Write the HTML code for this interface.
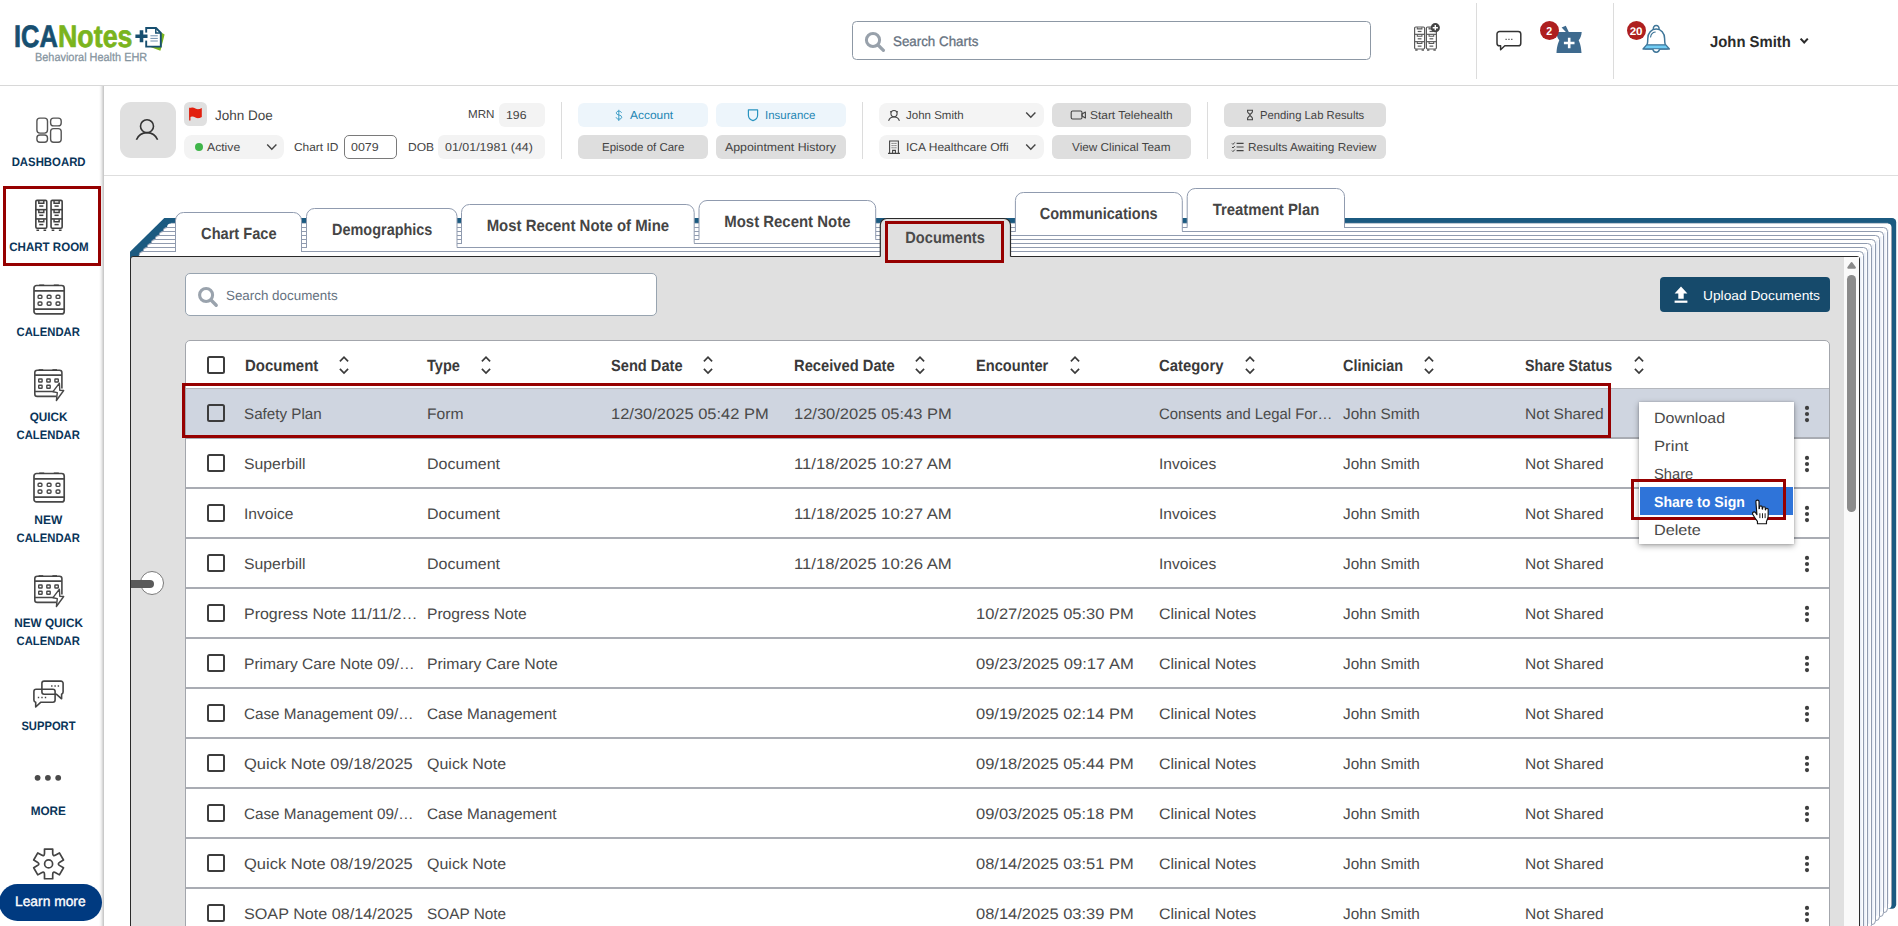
<!DOCTYPE html>
<html><head><meta charset="utf-8"><title>ICANotes</title>
<style>
html,body{margin:0;padding:0;background:#fff}
#root{position:relative;width:1898px;height:926px;overflow:hidden;background:#fff;font-family:"Liberation Sans",sans-serif}
.t{position:absolute;white-space:nowrap;line-height:20px}
.a{position:absolute}
svg{overflow:visible}
</style></head><body><div id="root">
<div class="a" style="left:0px;top:85px;width:1898px;height:1px;background:#d8d8d8"></div><span class="t" id="t0" style="top:17.30px;line-height:39px;font-size:31px;font-weight:700;color:#174f70;left:14.20px;transform-origin:0 50%;transform:matrix(0.8204,0.0005,0,1,0,0);-webkit-text-stroke:0.7px #174f70;">ICA</span><span class="t" id="t1" style="top:17.30px;line-height:39px;font-size:31px;font-weight:700;color:#7ab41d;left:58.30px;transform-origin:0 50%;transform:matrix(0.8649,0.0005,0,1,0,0);-webkit-text-stroke:0.7px #7ab41d;">Notes</span><svg class="a" style="left:134px;top:24px;" width="34" height="30" viewBox="0 0 34 30">
<path d="M12.4 21.6l14 5.2 4.2-16.400-3.400-1.800z" fill="#7ab41d"/>
<path d="M12.200 4h9.800l4.800 4.800v13.800h-14.600z" fill="#fff" stroke="#174f70" stroke-width="1.900" stroke-linejoin="miter"/>
<path d="M21.800 4v5h5" fill="none" stroke="#174f70" stroke-width="1.500"/>
<path d="M16.400 11.800h7.400M16.400 14.400h7.400M16.400 17h7.400" stroke="#6f8fae" stroke-width="1"/>
<rect x="10.600" y="8.600" width="3.600" height="8" fill="#fff"/>
<path d="M1.400 12.300h12.100M7.500 6.300v12" stroke="#174f70" stroke-width="3.600" fill="none"/>
</svg><span class="t" id="t2" style="top:48.30px;line-height:17px;font-size:11.7px;font-weight:400;color:#84939e;left:34.80px;transform-origin:0 50%;transform:matrix(0.9335,0.0005,0,1,0,0);-webkit-text-stroke:0.250px #84939e;">Behavioral Health EHR</span><div class="a" style="left:852px;top:21.2px;width:516.6px;height:37.2px;border:1px solid #8d98a5;border-radius:4.500px;background:#fff"></div><svg class="a" style="left:862px;top:28px;" width="26" height="26" viewBox="0 0 26 26"><circle cx="11" cy="12" r="6.6" fill="none" stroke="#98a1ab" stroke-width="3"/><path d="M16 17l5.4 5.4" stroke="#98a1ab" stroke-width="3.2" stroke-linecap="round"/></svg><span class="t" id="t3" style="top:32.30px;line-height:19px;font-size:13.8px;font-weight:400;color:#66727f;left:892.90px;transform-origin:0 50%;transform:matrix(0.9673,0.0005,0,1,0,0);-webkit-text-stroke:0.3px #66727f;">Search Charts</span><svg class="a" style="left:1412px;top:22px;" width="30" height="32" viewBox="0 0 30 32"><rect x="2.6" y="5" width="10" height="22" rx="1.200" fill="#fff" stroke="#5a5a5a" stroke-width="1.2"/><path d="M2.6 12.3333h10" stroke="#5a5a5a" stroke-width="1.2"/><path d="M2.6 19.6667h10" stroke="#5a5a5a" stroke-width="1.2"/><path d="M5.3 5.3v1.6h4.6v-1.6" fill="none" stroke="#5a5a5a" stroke-width="1.08"/><path d="M5.7 9.47333h3.8" stroke="#5a5a5a" stroke-width="1.2"/><path d="M5.3 12.6333v1.6h4.6v-1.6" fill="none" stroke="#5a5a5a" stroke-width="1.08"/><path d="M5.7 16.8067h3.8" stroke="#5a5a5a" stroke-width="1.2"/><path d="M5.3 19.9667v1.6h4.6v-1.6" fill="none" stroke="#5a5a5a" stroke-width="1.08"/><path d="M5.7 24.14h3.8" stroke="#5a5a5a" stroke-width="1.2"/><path d="M3.2 28h2.4M9.6 28h2.4" stroke="#5a5a5a" stroke-width="1.6"/><rect x="14.4" y="5" width="10" height="22" rx="1.200" fill="#fff" stroke="#5a5a5a" stroke-width="1.2"/><path d="M14.4 12.3333h10" stroke="#5a5a5a" stroke-width="1.2"/><path d="M14.4 19.6667h10" stroke="#5a5a5a" stroke-width="1.2"/><path d="M17.1 5.3v1.6h4.6v-1.6" fill="none" stroke="#5a5a5a" stroke-width="1.08"/><path d="M17.5 9.47333h3.8" stroke="#5a5a5a" stroke-width="1.2"/><path d="M17.1 12.6333v1.6h4.6v-1.6" fill="none" stroke="#5a5a5a" stroke-width="1.08"/><path d="M17.5 16.8067h3.8" stroke="#5a5a5a" stroke-width="1.2"/><path d="M17.1 19.9667v1.6h4.6v-1.6" fill="none" stroke="#5a5a5a" stroke-width="1.08"/><path d="M17.5 24.14h3.8" stroke="#5a5a5a" stroke-width="1.2"/><path d="M15 28h2.4M21.4 28h2.4" stroke="#5a5a5a" stroke-width="1.6"/><circle cx="23.3" cy="5.7" r="4.6" fill="#444"/><path d="M20.7 5.7h5.2M23.3 3.1v5.2" stroke="#fff" stroke-width="1.4"/></svg><div class="a" style="left:1476px;top:3px;width:1px;height:76px;background:#dcdcdc"></div><svg class="a" style="left:1494px;top:28px;" width="30" height="26" viewBox="0 0 30 26"><path d="M5.6 3.4h18.6a2.6 2.6 0 0 1 2.6 2.6v9.2a2.6 2.6 0 0 1 -2.6 2.6h-13.4l-4.2 4v-4h-1a2.6 2.6 0 0 1 -2.6 -2.6v-9.2a2.6 2.6 0 0 1 2.6 -2.6z" fill="#fff" stroke="#333" stroke-width="1.5" stroke-linejoin="round"/><path d="M11.4 11.3h1.5M14.2 11.3h1.5M17 11.3h1.5" stroke="#444" stroke-width="1"/></svg><svg class="a" style="left:1554px;top:24px;" width="30" height="32" viewBox="0 0 30 32"><path d="M7.600 3.600l4.200 -1.800 3 6.100h12.900c-.2 3.6-1.4 6.2-3 8.4 1.4 3.2 2.4 6.4 2.8 12.7h-25c.4-6.3 1.4-9.5 2.8-12.7-1.6-2.2-2.8-4.8-3-8.4h9.6z" fill="#3e6a8e"/><path d="M9.900 19h10.600M15.200 13.700v10.600" stroke="#fff" stroke-width="2.600"/></svg><div class="a" style="left:1540px;top:21px;width:19px;height:19px;border-radius:50%;background:#ae1f1f"></div><div class="t" style="top:23.30px;line-height:16px;font-size:11.5px;font-weight:700;color:#fff;left:1549.60px;width:0;display:flex;justify-content:center;"><span id="t4" style="display:inline-block;transform:matrix(0.9300,0.0005,0,1,0,0);">2</span></div><div class="a" style="left:1613px;top:3px;width:1px;height:76px;background:#dcdcdc"></div><svg class="a" style="left:1640px;top:22px;" width="32" height="34" viewBox="0 0 32 34">
<path d="M5.2 26.7c2.4-2.6 2.6-5 2.6-10.2 0-5.4 3.6-9.4 8.4-9.4s8.4 4 8.4 9.4c0 5.2.2 7.600 2.600 10.200z" fill="#fff" stroke="#3f7699" stroke-width="1.5" stroke-linejoin="round"/>
<path d="M6.600 22.800h19.200l3.600 4.200h-26.400z" fill="#72cdf4" stroke="#3f7699" stroke-width="1.3" stroke-linejoin="round"/>
<path d="M13.4 7.4c-.4-2.4.8-3.800 2.800-3.800s3.200 1.400 2.800 3.800" fill="none" stroke="#3f7699" stroke-width="1.5"/>
<path d="M12.800 27.200c.4 2 1.600 3 3.400 3s3-1 3.400-3" fill="#fff" stroke="#3f7699" stroke-width="1.5"/>
<path d="M10.600 15c.4-2.800 2-4.600 4.600-5" fill="none" stroke="#3f7699" stroke-width="1.2" stroke-linecap="round"/>
</svg><div class="a" style="left:1627px;top:21px;width:19px;height:19px;border-radius:50%;background:#ae1f1f"></div><div class="t" style="top:23.30px;line-height:16px;font-size:11px;font-weight:700;color:#fff;left:1636.40px;width:0;display:flex;justify-content:center;"><span id="t5" style="display:inline-block;transform:matrix(1.0612,0.0005,0,1,0,0);">20</span></div><span class="t" id="t6" style="top:31.30px;line-height:21px;font-size:15.6px;font-weight:700;color:#2b2b2b;left:1709.50px;transform-origin:0 50%;transform:matrix(0.9516,0.0005,0,1,0,0);">John Smith</span><svg class="a" style="left:1799px;top:36px;" width="12" height="10" viewBox="0 0 12 10"><path d="M1.6 2.6l3.600 3.800 3.600-3.800" fill="none" stroke="#2b2b2b" stroke-width="2.1"/></svg><div class="a" style="left:98.5px;top:86px;width:5.3px;height:840px;background:linear-gradient(to right,rgba(0,0,0,0),rgba(0,0,0,0.050) 40%,rgba(0,0,0,0.240))"></div><svg class="a" style="left:34px;top:115px;" width="30" height="30" viewBox="0 0 30 30"><g fill="none" stroke="#555" stroke-width="1.4"><rect x="2.9" y="3.100" width="10.600" height="15" rx="3"/><rect x="16.600" y="3.100" width="10.600" height="7.800" rx="3"/><rect x="2.900" y="20" width="10.600" height="7.200" rx="3"/><rect x="16.600" y="13.600" width="10.600" height="13.600" rx="3"/></g></svg><div class="t" style="top:153.30px;line-height:18px;font-size:12.2px;font-weight:700;color:#0a3559;left:48.80px;width:0;display:flex;justify-content:center;"><span id="t7" style="display:inline-block;transform:matrix(0.9329,0.0005,0,1,0,0);">DASHBOARD</span></div><div class="a" style="left:3px;top:185.5px;width:92px;height:74.5px;border:3px solid #960000"></div><svg class="a" style="left:32px;top:196.8px;" width="34" height="38" viewBox="0 0 34 38"><rect x="3.85" y="3.4" width="10.9" height="27.8" rx="1.200" fill="#fff" stroke="#404040" stroke-width="1.6"/><path d="M3.85 12.6667h10.9" stroke="#404040" stroke-width="1.6"/><path d="M3.85 21.9333h10.9" stroke="#404040" stroke-width="1.6"/><path d="M6.793 3.7v2.6h5.014v-2.6" fill="none" stroke="#404040" stroke-width="1.44"/><path d="M7.229 9.05267h4.142" stroke="#404040" stroke-width="1.5"/><path d="M6.793 12.9667v2.6h5.014v-2.6" fill="none" stroke="#404040" stroke-width="1.44"/><path d="M7.229 18.3193h4.142" stroke="#404040" stroke-width="1.5"/><path d="M6.793 22.2333v2.6h5.014v-2.6" fill="none" stroke="#404040" stroke-width="1.44"/><path d="M7.229 27.586h4.142" stroke="#404040" stroke-width="1.5"/><path d="M4.45 33.3h2.616M11.534 33.3h2.616" stroke="#404040" stroke-width="1.5"/><rect x="19.05" y="3.4" width="11.1" height="27.8" rx="1.200" fill="#fff" stroke="#404040" stroke-width="1.6"/><path d="M19.05 12.6667h11.1" stroke="#404040" stroke-width="1.6"/><path d="M19.05 21.9333h11.1" stroke="#404040" stroke-width="1.6"/><path d="M22.047 3.7v2.6h5.106v-2.6" fill="none" stroke="#404040" stroke-width="1.44"/><path d="M22.491 9.05267h4.218" stroke="#404040" stroke-width="1.5"/><path d="M22.047 12.9667v2.6h5.106v-2.6" fill="none" stroke="#404040" stroke-width="1.44"/><path d="M22.491 18.3193h4.218" stroke="#404040" stroke-width="1.5"/><path d="M22.047 22.2333v2.6h5.106v-2.6" fill="none" stroke="#404040" stroke-width="1.44"/><path d="M22.491 27.586h4.218" stroke="#404040" stroke-width="1.5"/><path d="M19.65 33.3h2.664M26.886 33.3h2.664" stroke="#404040" stroke-width="1.5"/></svg><div class="t" style="top:238.30px;line-height:18px;font-size:12.2px;font-weight:700;color:#0a3559;left:48.60px;width:0;display:flex;justify-content:center;"><span id="t8" style="display:inline-block;transform:matrix(0.9470,0.0005,0,1,0,0);">CHART ROOM</span></div><svg class="a" style="left:32px;top:283px;" width="34" height="34" viewBox="0 0 34 34"><g fill="none" stroke="#484848" stroke-width="1.700"><rect x="2" y="2.500" width="30.200" height="28.400" rx="2.500"/><path d="M2 7.900H32.200M2 26.200H32.200"/></g><g fill="none" stroke="#484848" stroke-width="1.400"><rect x="6.1" y="12.2" width="3.800" height="3.200" rx="1"/><rect x="15.2" y="12.2" width="3.800" height="3.200" rx="1"/><rect x="24.1" y="12.2" width="3.800" height="3.200" rx="1"/><rect x="6.1" y="19" width="3.800" height="3.200" rx="1"/><rect x="15.2" y="19" width="3.800" height="3.200" rx="1"/><rect x="24.1" y="19" width="3.800" height="3.200" rx="1"/></g><path d="M7.200 2.200h5M21.800 2.200h5" stroke="#3a3a3a" stroke-width="1.300"/></svg><div class="t" style="top:323.30px;line-height:18px;font-size:12.2px;font-weight:700;color:#0a3559;left:48.60px;width:0;display:flex;justify-content:center;"><span id="t9" style="display:inline-block;transform:matrix(0.9241,0.0005,0,1,0,0);">CALENDAR</span></div><svg class="a" style="left:33px;top:368px;" width="33" height="36" viewBox="0 0 33 36"><g fill="none" stroke="#484848" stroke-width="1.600"><path d="M28.900 20.500V4.600a2.400 2.400 0 0 0 -2.400 -2.400H4.200a2.400 2.400 0 0 0 -2.400 2.400V26a2.400 2.400 0 0 0 2.400 2.400H23.600"/><path d="M1.800 7.100H28.900M1.800 23.500H20.400"/></g><g fill="none" stroke="#484848" stroke-width="1.400"><rect x="5.7" y="11" width="3.400" height="3" rx="0.500"/><rect x="13.8" y="11" width="3.400" height="3" rx="0.500"/><rect x="21.9" y="11" width="3.400" height="3" rx="0.500"/><rect x="5.7" y="17.2" width="3.400" height="3" rx="0.500"/><rect x="13.8" y="17.2" width="3.400" height="3" rx="0.500"/></g><path d="M26.400 15.200L20 23.700l4.300.900-.900 7.900 7.300-10-3.900-.200z" fill="#fff" stroke="#484848" stroke-width="1.400" stroke-linejoin="round"/><path d="M5.600 1.900h4.600M19.400 1.900h4.600" stroke="#3a3a3a" stroke-width="1.300"/></svg><div class="t" style="top:408.30px;line-height:18px;font-size:12.2px;font-weight:700;color:#0a3559;left:48.60px;width:0;display:flex;justify-content:center;"><span id="t10" style="display:inline-block;transform:matrix(0.9648,0.0005,0,1,0,0);">QUICK</span></div><div class="t" style="top:426.30px;line-height:18px;font-size:12.2px;font-weight:700;color:#0a3559;left:48.60px;width:0;display:flex;justify-content:center;"><span id="t11" style="display:inline-block;transform:matrix(0.9241,0.0005,0,1,0,0);">CALENDAR</span></div><svg class="a" style="left:31.85px;top:470.85px;" width="34" height="34" viewBox="0 0 34 34"><g fill="none" stroke="#484848" stroke-width="1.700"><rect x="2" y="2.500" width="30.200" height="28.400" rx="2.500"/><path d="M2 7.900H32.200M2 26.200H32.200"/></g><g fill="none" stroke="#484848" stroke-width="1.400"><rect x="6.1" y="12.2" width="3.800" height="3.200" rx="1"/><rect x="15.2" y="12.2" width="3.800" height="3.200" rx="1"/><rect x="24.1" y="12.2" width="3.800" height="3.200" rx="1"/><rect x="6.1" y="19" width="3.800" height="3.200" rx="1"/><rect x="15.2" y="19" width="3.800" height="3.200" rx="1"/><rect x="24.1" y="19" width="3.800" height="3.200" rx="1"/></g><path d="M7.200 2.200h5M21.800 2.200h5" stroke="#3a3a3a" stroke-width="1.300"/></svg><div class="t" style="top:511.30px;line-height:18px;font-size:12.2px;font-weight:700;color:#0a3559;left:48.60px;width:0;display:flex;justify-content:center;"><span id="t12" style="display:inline-block;transform:matrix(0.9846,0.0005,0,1,0,0);">NEW</span></div><div class="t" style="top:529.30px;line-height:18px;font-size:12.2px;font-weight:700;color:#0a3559;left:48.60px;width:0;display:flex;justify-content:center;"><span id="t13" style="display:inline-block;transform:matrix(0.9241,0.0005,0,1,0,0);">CALENDAR</span></div><svg class="a" style="left:32.9px;top:574.2px;" width="33" height="36" viewBox="0 0 33 36"><g fill="none" stroke="#484848" stroke-width="1.600"><path d="M28.900 20.500V4.600a2.400 2.400 0 0 0 -2.400 -2.400H4.200a2.400 2.400 0 0 0 -2.400 2.400V26a2.400 2.400 0 0 0 2.400 2.400H23.600"/><path d="M1.800 7.100H28.900M1.800 23.500H20.400"/></g><g fill="none" stroke="#484848" stroke-width="1.400"><rect x="5.7" y="11" width="3.400" height="3" rx="0.500"/><rect x="13.8" y="11" width="3.400" height="3" rx="0.500"/><rect x="21.9" y="11" width="3.400" height="3" rx="0.500"/><rect x="5.7" y="17.2" width="3.400" height="3" rx="0.500"/><rect x="13.8" y="17.2" width="3.400" height="3" rx="0.500"/></g><path d="M26.400 15.200L20 23.700l4.300.900-.900 7.900 7.300-10-3.900-.200z" fill="#fff" stroke="#484848" stroke-width="1.400" stroke-linejoin="round"/><path d="M5.600 1.900h4.600M19.400 1.900h4.600" stroke="#3a3a3a" stroke-width="1.300"/></svg><div class="t" style="top:614.30px;line-height:18px;font-size:12.2px;font-weight:700;color:#0a3559;left:48.40px;width:0;display:flex;justify-content:center;"><span id="t14" style="display:inline-block;transform:matrix(0.9663,0.0005,0,1,0,0);">NEW QUICK</span></div><div class="t" style="top:632.30px;line-height:18px;font-size:12.2px;font-weight:700;color:#0a3559;left:48.60px;width:0;display:flex;justify-content:center;"><span id="t15" style="display:inline-block;transform:matrix(0.9241,0.0005,0,1,0,0);">CALENDAR</span></div><svg class="a" style="left:31px;top:678px;" width="36" height="32" viewBox="0 0 36 32"><g fill="none" stroke="#444" stroke-width="1.600" stroke-linejoin="round">
<path d="M13.100 3.100H29.900a2.200 2.200 0 0 1 2.200 2.200V14q0 1.500 -1.500 2.200v4.600L25.300 16.200H13.100a2.200 2.200 0 0 1 -2.200 -2.200V5.300a2.200 2.200 0 0 1 2.200 -2.200z"/>
<path d="M5.100 11.200H21.900a2.200 2.200 0 0 1 2.200 2.200V22.100a2.200 2.200 0 0 1 -2.200 2.200H9.600L4.700 29V24.300q-1.800 -.500 -1.800 -2.200V13.400a2.200 2.200 0 0 1 2.200 -2.200z"/></g>
<path d="M20.100 8h1.400M23.400 8h1.400M26.700 8h1.400M6.800 19.400h1.400M10.300 19.400h1.400M13.800 19.400h1.400" stroke="#444" stroke-width="1.500"/></svg><div class="t" style="top:717.30px;line-height:18px;font-size:12.2px;font-weight:700;color:#0a3559;left:48.50px;width:0;display:flex;justify-content:center;"><span id="t16" style="display:inline-block;transform:matrix(0.9182,0.0005,0,1,0,0);">SUPPORT</span></div><svg class="a" style="left:32px;top:772px;" width="32" height="12" viewBox="0 0 32 12"><g fill="#4a4a4a"><circle cx="5.600" cy="5.800" r="2.900"/><circle cx="15.900" cy="5.800" r="2.900"/><circle cx="26.200" cy="5.800" r="2.900"/></g></svg><div class="t" style="top:802.30px;line-height:18px;font-size:12.2px;font-weight:700;color:#0a3559;left:48.60px;width:0;display:flex;justify-content:center;"><span id="t17" style="display:inline-block;transform:matrix(0.9627,0.0005,0,1,0,0);">MORE</span></div><svg class="a" style="left:32px;top:846px;" width="34" height="36" viewBox="0 0 34 36"><path d="M12.50 7.37L12.50 3.06L20.70 3.06L20.70 7.37Q20.75 10.71 23.67 9.08L23.67 9.08L27.41 6.93L31.51 14.03L27.77 16.19Q24.90 17.90 27.77 19.61L27.77 19.61L31.51 21.77L27.41 28.87L23.67 26.72Q20.75 25.09 20.70 28.43L20.70 28.43L20.70 32.74L12.50 32.74L12.50 28.43Q12.45 25.09 9.53 26.72L9.53 26.72L5.79 28.87L1.69 21.77L5.43 19.61Q8.30 17.90 5.43 16.19L5.43 16.19L1.69 14.03L5.79 6.93L9.53 9.08Q12.45 10.71 12.50 7.37Z" fill="#fff" stroke="#444" stroke-width="1.700" stroke-linejoin="round"/><circle cx="16.600" cy="17.900" r="4" fill="#fff" stroke="#444" stroke-width="1.700"/></svg><div class="a" style="left:-1px;top:884px;width:103px;height:37px;background:#003a80;border-radius:18.500px"></div><span class="t" id="t18" style="top:891.30px;line-height:20px;font-size:14px;font-weight:400;color:#fff;left:15.40px;transform-origin:0 50%;transform:matrix(0.9861,0.0005,0,1,0,0);-webkit-text-stroke:0.350px #fff;">Learn more</span><div class="a" style="left:104px;top:175px;width:1794px;height:1px;background:#dedede"></div><div class="a" style="left:120px;top:102px;width:56px;height:56px;background:#e0e0e0;border-radius:11px"></div><svg class="a" style="left:133px;top:116px;" width="28" height="28" viewBox="0 0 28 28"><circle cx="14" cy="10.200" r="6.500" fill="none" stroke="#333" stroke-width="1.600"/><path d="M3.400 23.800c2-4.800 6-7.200 10.600-7.200s8.600 2.400 10.600 7.200" fill="none" stroke="#333" stroke-width="1.600"/></svg><div class="a" style="left:184px;top:102px;width:23px;height:23.8px;background:#e0e0e0;border-radius:5.500px"></div><svg class="a" style="left:187px;top:105px;" width="18" height="18" viewBox="0 0 18 18"><path d="M2.800 2.800v12.800" stroke="#d81e0e" stroke-width="1.300"/><path d="M2.400 3.400c2.200-1.500 4.200-1 6 0s3.600 1.200 6.400-.4v9c-2.800 1.600-4.600 1.400-6.400.4s-3.800-1.500-6 0z" fill="#e2200e"/></svg><span class="t" id="t19" style="top:106.30px;line-height:19px;font-size:13.7px;font-weight:400;color:#444;left:215.20px;transform-origin:0 50%;transform:matrix(0.9865,0.0005,0,1,0,0);">John Doe</span><span class="t" id="t20" style="top:106.30px;line-height:16px;font-size:11.5px;font-weight:400;color:#444;left:467.50px;transform-origin:0 50%;transform:matrix(1.0113,0.0005,0,1,0,0);">MRN</span><div class="a" style="left:499px;top:103px;width:46px;height:23.7px;background:#f3f3f3;border-radius:6px"></div><span class="t" id="t21" style="top:107.30px;line-height:16px;font-size:11.5px;font-weight:400;color:#444;left:505.80px;transform-origin:0 50%;transform:matrix(1.0684,0.0005,0,1,0,0);">196</span><div class="a" style="left:184px;top:135px;width:100.3px;height:23.8px;background:#f3f3f3;border-radius:8px"></div><div class="a" style="left:194.8px;top:142.8px;width:8.2px;height:8.2px;background:#3fb54a;border-radius:50%"></div><span class="t" id="t22" style="top:139.30px;line-height:16px;font-size:11.5px;font-weight:400;color:#444;left:207.20px;transform-origin:0 50%;transform:matrix(1.0598,0.0005,0,1,0,0);">Active</span><svg class="a" style="left:265px;top:141px;" width="14" height="12" viewBox="0 0 14 12"><path d="M2.200 3.400l4.600 4.800 4.600-4.800" fill="none" stroke="#444" stroke-width="1.400"/></svg><span class="t" id="t23" style="top:139.30px;line-height:16px;font-size:11.5px;font-weight:400;color:#444;left:294.40px;transform-origin:0 50%;transform:matrix(1.0367,0.0005,0,1,0,0);">Chart ID</span><div class="a" style="left:343.5px;top:135px;width:51.4px;height:21.8px;border:1px solid #7a7a7a;border-radius:5px;background:#fff"></div><span class="t" id="t24" style="top:139.30px;line-height:16px;font-size:11.5px;font-weight:400;color:#444;left:351.30px;transform-origin:0 50%;transform:matrix(1.0823,0.0005,0,1,0,0);">0079</span><span class="t" id="t25" style="top:139.30px;line-height:16px;font-size:11.5px;font-weight:400;color:#444;left:407.50px;transform-origin:0 50%;transform:matrix(1.0473,0.0005,0,1,0,0);">DOB</span><div class="a" style="left:438px;top:135px;width:107px;height:23.8px;background:#f3f3f3;border-radius:6px"></div><span class="t" id="t26" style="top:139.30px;line-height:16px;font-size:11.5px;font-weight:400;color:#444;left:444.80px;transform-origin:0 50%;transform:matrix(1.0825,0.0005,0,1,0,0);">01/01/1981 (44)</span><div class="a" style="left:561px;top:102px;width:1px;height:57px;background:#dcdcdc"></div><div class="a" style="left:578px;top:103px;width:130px;height:23.7px;background:#edf5fb;border-radius:6px"></div><div class="a" style="left:716px;top:103px;width:130px;height:23.7px;background:#edf5fb;border-radius:6px"></div><svg class="a" style="left:614.2px;top:108.6px;" width="12" height="16" viewBox="0 0 12 16"><path transform="scale(0.8)" d="M6 1v14M9.400 4.800c-.4-1.400-1.600-2.100-3.300-2.100-1.900 0-3.200.9-3.200 2.400 0 3.300 6.800 1.500 6.800 5.100 0 1.600-1.400 2.500-3.500 2.500-1.900 0-3.200-.8-3.600-2.300" fill="none" stroke="#2a94c0" stroke-width="1.100"/></svg><span class="t" id="t27" style="top:107.30px;line-height:16px;font-size:11.5px;font-weight:400;color:#1d86b3;left:630.10px;transform-origin:0 50%;transform:matrix(1.0394,0.0005,0,1,0,0);">Account</span><svg class="a" style="left:746px;top:108px;" width="14" height="14" viewBox="0 0 14 14"><path d="M2.400 1.800h9.200v5.400c0 2.800-2 4.600-4.600 5.400-2.600-.8-4.600-2.600-4.600-5.400z" fill="none" stroke="#2a94c0" stroke-width="1.200" stroke-linejoin="round"/></svg><span class="t" id="t28" style="top:107.30px;line-height:16px;font-size:11.5px;font-weight:400;color:#1d86b3;left:764.60px;transform-origin:0 50%;transform:matrix(0.9977,0.0005,0,1,0,0);">Insurance</span><div class="a" style="left:578px;top:135px;width:130px;height:23.8px;background:#dedede;border-radius:6px"></div><div class="a" style="left:716px;top:135px;width:130px;height:23.8px;background:#dedede;border-radius:6px"></div><span class="t" id="t29" style="top:139.30px;line-height:16px;font-size:11.5px;font-weight:400;color:#444;left:601.70px;transform-origin:0 50%;transform:matrix(0.9980,0.0005,0,1,0,0);">Episode of Care</span><span class="t" id="t30" style="top:139.30px;line-height:16px;font-size:11.5px;font-weight:400;color:#444;left:725.40px;transform-origin:0 50%;transform:matrix(1.0720,0.0005,0,1,0,0);">Appointment History</span><div class="a" style="left:862px;top:102px;width:1px;height:57px;background:#dcdcdc"></div><div class="a" style="left:879px;top:103.3px;width:164.5px;height:23.6px;background:#f4f4f4;border-radius:8px"></div><div class="a" style="left:879px;top:135.1px;width:164.5px;height:23.7px;background:#f3f3f3;border-radius:8px"></div><svg class="a" style="left:887px;top:108px;" width="14" height="14" viewBox="0 0 14 14"><circle cx="7" cy="5.600" r="3.100" fill="none" stroke="#444" stroke-width="1.100"/><path d="M1.600 12.800c.8-2.600 2.800-3.800 5.400-3.800s4.600 1.200 5.400 3.800M3.200 3.400l1.200 1M10.800 3.400l-1.200 1" fill="none" stroke="#444" stroke-width="1.100"/></svg><span class="t" id="t31" style="top:107.30px;line-height:16px;font-size:11.5px;font-weight:400;color:#444;left:906.30px;transform-origin:0 50%;transform:matrix(1.0012,0.0005,0,1,0,0);">John Smith</span><svg class="a" style="left:1024px;top:109px;" width="14" height="12" viewBox="0 0 14 12"><path d="M2.200 3.400l4.600 4.800 4.600-4.800" fill="none" stroke="#444" stroke-width="1.400"/></svg><svg class="a" style="left:887px;top:139px;" width="14" height="16" viewBox="0 0 14 16"><path d="M2.600 14.400v-12.400h8.800v12.400M1 14.400h12M5.600 14.400v-3h2.800v3" fill="none" stroke="#444" stroke-width="1.100"/><path d="M4.600 4.400h1M6.500 4.400h1M8.400 4.400h1M4.600 6.600h1M6.500 6.600h1M8.400 6.600h1M4.600 8.800h1M6.500 8.800h1M8.400 8.800h1" stroke="#444" stroke-width="1"/></svg><span class="t" id="t32" style="top:139.30px;line-height:16px;font-size:11.5px;font-weight:400;color:#444;left:906.30px;transform-origin:0 50%;transform:matrix(1.0455,0.0005,0,1,0,0);">ICA Healthcare Offi</span><svg class="a" style="left:1024px;top:141px;" width="14" height="12" viewBox="0 0 14 12"><path d="M2.200 3.400l4.600 4.800 4.600-4.800" fill="none" stroke="#444" stroke-width="1.400"/></svg><div class="a" style="left:1052px;top:103.3px;width:139px;height:23.6px;background:#dedede;border-radius:6px"></div><div class="a" style="left:1052px;top:135.1px;width:139px;height:23.7px;background:#dedede;border-radius:6px"></div><svg class="a" style="left:1070px;top:109px;" width="18" height="12" viewBox="0 0 18 12"><rect x="1.200" y="2" width="10.800" height="8" rx="1.400" fill="none" stroke="#444" stroke-width="1.100"/><path d="M12 5l3.400-2v6l-3.400-2z" fill="none" stroke="#444" stroke-width="1.100" stroke-linejoin="round"/></svg><span class="t" id="t33" style="top:107.30px;line-height:16px;font-size:11.5px;font-weight:400;color:#444;left:1089.60px;transform-origin:0 50%;transform:matrix(1.0363,0.0005,0,1,0,0);">Start Telehealth</span><span class="t" id="t34" style="top:139.30px;line-height:16px;font-size:11.5px;font-weight:400;color:#444;left:1071.90px;transform-origin:0 50%;transform:matrix(1.0250,0.0005,0,1,0,0);">View Clinical Team</span><div class="a" style="left:1207px;top:102px;width:1px;height:57px;background:#dcdcdc"></div><div class="a" style="left:1224px;top:103.3px;width:162px;height:23.6px;background:#dedede;border-radius:6px"></div><div class="a" style="left:1224px;top:135.1px;width:162px;height:23.7px;background:#dedede;border-radius:6px"></div><svg class="a" style="left:1245px;top:109px;" width="10" height="12" viewBox="0 0 10 12"><path d="M2 1.200h6M2 10.800h6M2.600 1.200v1.600c0 1.400 2.400 2 2.400 3.200s-2.400 1.800-2.400 3.200v1.600M7.400 1.200v1.600c0 1.400-2.400 2-2.400 3.200s2.400 1.800 2.400 3.200v1.600" fill="none" stroke="#444" stroke-width="1.100"/></svg><span class="t" id="t35" style="top:107.30px;line-height:16px;font-size:11.5px;font-weight:400;color:#444;left:1259.80px;transform-origin:0 50%;transform:matrix(0.9817,0.0005,0,1,0,0);">Pending Lab Results</span><svg class="a" style="left:1231px;top:141px;" width="14" height="12" viewBox="0 0 14 12"><path d="M5.600 2.400h7M5.600 6h7M5.600 9.600h7" stroke="#444" stroke-width="1.200"/><path d="M1 2.400l1 1 1.800-2M1 6l1 1 1.800-2M1 9.600l1 1 1.800-2" fill="none" stroke="#444" stroke-width="1"/></svg><span class="t" id="t36" style="top:139.30px;line-height:16px;font-size:11.5px;font-weight:400;color:#444;left:1248.00px;transform-origin:0 50%;transform:matrix(1.0266,0.0005,0,1,0,0);">Results Awaiting Review</span><svg class="a" style="left:0px;top:0px;" width="1898" height="926" viewBox="0 0 1898 926"><path d="M130 257V251.800L164.300 218H1892a4.200 4.200 0 0 1 4.200 4.200V904.500a4.200 4.200 0 0 1 -4.200 4.200H130z" fill="#1b5a80"/><path d="M167 960V227.500a4 4 0 0 1 4 -4H1887.500a4 4 0 0 1 4 4V904.700a4 4 0 0 1 -4 4H167z" fill="#fff"/><path d="M1891.500 227V905" stroke="#99a2b0" stroke-width="1" fill="none"/><path d="M171 223.400H1888" stroke="#d4d6dc" stroke-width="0.800" fill="none"/><path d="M163 960V231.5a4 4 0 0 1 4 -4H1883.5a4 4 0 0 1 4 4V908.7a4 4 0 0 1 -4 4H163z" fill="#fff" stroke="none"/><path d="M163 231.5a4 4 0 0 1 4 -4H1883.5a4 4 0 0 1 4 4V908.7a4 4 0 0 1 -4 4" fill="none" stroke="#909baf" stroke-width="1"/><path d="M1187.2 228V196.5a8 8 0 0 1 8 -8H1336.5a8 8 0 0 1 8 8V228" fill="#fff" stroke="#909baf" stroke-width="1"/><rect x="1187.7" y="226.5" width="156.3" height="2" fill="#fff"/><path d="M159 960V235.5a4 4 0 0 1 4 -4H1879.5a4 4 0 0 1 4 4V912.7a4 4 0 0 1 -4 4H159z" fill="#fff" stroke="none"/><path d="M159 235.5a4 4 0 0 1 4 -4H1879.5a4 4 0 0 1 4 4V912.7a4 4 0 0 1 -4 4" fill="none" stroke="#909baf" stroke-width="1"/><path d="M1015.4 232V200.5a8 8 0 0 1 8 -8H1174.3a8 8 0 0 1 8 8V232" fill="#fff" stroke="#909baf" stroke-width="1"/><rect x="1015.9" y="230.5" width="165.9" height="2" fill="#fff"/><path d="M155 960V239.5a4 4 0 0 1 4 -4H1875.5a4 4 0 0 1 4 4V916.7a4 4 0 0 1 -4 4H155z" fill="#fff" stroke="none"/><path d="M155 239.5a4 4 0 0 1 4 -4H1875.5a4 4 0 0 1 4 4V916.7a4 4 0 0 1 -4 4" fill="none" stroke="#909baf" stroke-width="1"/><path d="M151 960V243.5a4 4 0 0 1 4 -4H1871.5a4 4 0 0 1 4 4V920.7a4 4 0 0 1 -4 4H151z" fill="#fff" stroke="none"/><path d="M151 243.5a4 4 0 0 1 4 -4H1871.5a4 4 0 0 1 4 4V920.7a4 4 0 0 1 -4 4" fill="none" stroke="#909baf" stroke-width="1"/><path d="M699 240V208.5a8 8 0 0 1 8 -8H867.7a8 8 0 0 1 8 8V240" fill="#fff" stroke="#909baf" stroke-width="1"/><rect x="699.5" y="238.5" width="175.7" height="2" fill="#fff"/><path d="M147 960V247.5a4 4 0 0 1 4 -4H1867.5a4 4 0 0 1 4 4V924.7a4 4 0 0 1 -4 4H147z" fill="#fff" stroke="none"/><path d="M147 247.5a4 4 0 0 1 4 -4H1867.5a4 4 0 0 1 4 4V924.7a4 4 0 0 1 -4 4" fill="none" stroke="#909baf" stroke-width="1"/><path d="M461.5 244V212.5a8 8 0 0 1 8 -8H686.2a8 8 0 0 1 8 8V244" fill="#fff" stroke="#909baf" stroke-width="1"/><rect x="462" y="242.5" width="231.7" height="2" fill="#fff"/><path d="M143 960V251.5a4 4 0 0 1 4 -4H1863.5a4 4 0 0 1 4 4V928.7a4 4 0 0 1 -4 4H143z" fill="#fff" stroke="none"/><path d="M143 251.5a4 4 0 0 1 4 -4H1863.5a4 4 0 0 1 4 4V928.7a4 4 0 0 1 -4 4" fill="none" stroke="#909baf" stroke-width="1"/><path d="M306.5 248V216.5a8 8 0 0 1 8 -8H449a8 8 0 0 1 8 8V248" fill="#fff" stroke="#909baf" stroke-width="1"/><rect x="307" y="246.5" width="149.5" height="2" fill="#fff"/><path d="M139 960V255.5a4 4 0 0 1 4 -4H1859.5a4 4 0 0 1 4 4V932.7a4 4 0 0 1 -4 4H139z" fill="#fff" stroke="none"/><path d="M139 255.5a4 4 0 0 1 4 -4H1859.5a4 4 0 0 1 4 4V932.7a4 4 0 0 1 -4 4" fill="none" stroke="#909baf" stroke-width="1"/><path d="M175.5 252V220.5a8 8 0 0 1 8 -8H293.5a8 8 0 0 1 8 8V252" fill="#fff" stroke="#909baf" stroke-width="1"/><rect x="176" y="250.5" width="125" height="2" fill="#fff"/><rect x="1860" y="256.5" width="1" height="675.2" fill="#e9eef7"/><rect x="1861" y="256.5" width="1" height="675.2" fill="#f2f5fb"/><rect x="1862" y="256.5" width="1" height="675.2" fill="#fbfcfe"/><rect x="1864" y="252.5" width="1" height="675.2" fill="#e9eef7"/><rect x="1865" y="252.5" width="1" height="675.2" fill="#f2f5fb"/><rect x="1866" y="252.5" width="1" height="675.2" fill="#fbfcfe"/><rect x="1868" y="248.5" width="1" height="675.2" fill="#e9eef7"/><rect x="1869" y="248.5" width="1" height="675.2" fill="#f2f5fb"/><rect x="1870" y="248.5" width="1" height="675.2" fill="#fbfcfe"/><rect x="1872" y="244.5" width="1" height="675.2" fill="#e9eef7"/><rect x="1873" y="244.5" width="1" height="675.2" fill="#f2f5fb"/><rect x="1874" y="244.5" width="1" height="675.2" fill="#fbfcfe"/><rect x="1876" y="240.5" width="1" height="675.2" fill="#e9eef7"/><rect x="1877" y="240.5" width="1" height="675.2" fill="#f2f5fb"/><rect x="1878" y="240.5" width="1" height="675.2" fill="#fbfcfe"/><rect x="1880" y="236.5" width="1" height="675.2" fill="#e9eef7"/><rect x="1881" y="236.5" width="1" height="675.2" fill="#f2f5fb"/><rect x="1882" y="236.5" width="1" height="675.2" fill="#fbfcfe"/><rect x="1884" y="232.5" width="1" height="675.2" fill="#e9eef7"/><rect x="1885" y="232.5" width="1" height="675.2" fill="#f2f5fb"/><rect x="1886" y="232.5" width="1" height="675.2" fill="#fbfcfe"/><rect x="1888" y="229.5" width="1" height="674.5" fill="#eef2f9"/><rect x="130.500" y="256.500" width="1729" height="700" rx="2.500" fill="#e0e0e0" stroke="#2a2a2a" stroke-width="1"/><path d="M880.3 258V225a6.5 6.5 0 0 1 6.5 -6.5H1004a6.5 6.5 0 0 1 6.5 6.5V258z" fill="#e0e0e0" stroke="none"/><path d="M880.3 256.500V225a6.5 6.5 0 0 1 6.5 -6.5H1004a6.5 6.5 0 0 1 6.5 6.5V256.500" fill="none" stroke="#2a2a2a" stroke-width="1.200"/></svg><div class="t" style="top:222.30px;line-height:22px;font-size:16.2px;font-weight:700;color:#454545;left:238.50px;width:0;display:flex;justify-content:center;"><span id="t37" style="display:inline-block;transform:matrix(0.9023,0.0005,0,1,0,0);">Chart Face</span></div><div class="t" style="top:218.30px;line-height:22px;font-size:16.2px;font-weight:700;color:#454545;left:381.75px;width:0;display:flex;justify-content:center;"><span id="t38" style="display:inline-block;transform:matrix(0.8919,0.0005,0,1,0,0);">Demographics</span></div><div class="t" style="top:214.30px;line-height:22px;font-size:16.2px;font-weight:700;color:#454545;left:577.85px;width:0;display:flex;justify-content:center;"><span id="t39" style="display:inline-block;transform:matrix(0.9224,0.0005,0,1,0,0);">Most Recent Note of Mine</span></div><div class="t" style="top:210.30px;line-height:22px;font-size:16.2px;font-weight:700;color:#454545;left:787.35px;width:0;display:flex;justify-content:center;"><span id="t40" style="display:inline-block;transform:matrix(0.9231,0.0005,0,1,0,0);">Most Recent Note</span></div><div class="t" style="top:202.30px;line-height:22px;font-size:16.2px;font-weight:700;color:#454545;left:1098.85px;width:0;display:flex;justify-content:center;"><span id="t41" style="display:inline-block;transform:matrix(0.8986,0.0005,0,1,0,0);">Communications</span></div><div class="t" style="top:198.30px;line-height:22px;font-size:16.2px;font-weight:700;color:#454545;left:1265.85px;width:0;display:flex;justify-content:center;"><span id="t42" style="display:inline-block;transform:matrix(0.9195,0.0005,0,1,0,0);">Treatment Plan</span></div><div class="t" style="top:226.30px;line-height:22px;font-size:16.2px;font-weight:700;color:#4a4a4a;left:945.40px;width:0;display:flex;justify-content:center;"><span id="t43" style="display:inline-block;transform:matrix(0.9029,0.0005,0,1,0,0);">Documents</span></div><div class="a" style="left:885px;top:221px;width:113px;height:36px;border:3px solid #960000"></div><div class="a" style="left:1844px;top:257px;width:15px;height:669px;background:#fafafa"></div><svg class="a" style="left:1844px;top:258px;" width="15" height="14" viewBox="0 0 15 14"><path d="M4.300 9.700l3.300-4.600 3.300 4.600z" fill="#8a8a8a" stroke="#8a8a8a" stroke-width="2" stroke-linejoin="round"/></svg><div class="a" style="left:1847.2px;top:274.8px;width:8.8px;height:237.4px;background:#8b8b8b;border-radius:4.400px"></div><div class="a" style="left:139.5px;top:571.4px;width:22px;height:22px;background:#fff;border:1px solid #7a7a7a;border-radius:50%"></div><div class="a" style="left:131px;top:580.1px;width:22.7px;height:7.7px;background:#5a5a5a;border-radius:0 4px 4px 0"></div><div class="a" style="left:185px;top:273.2px;width:470px;height:41.2px;border:1px solid #98a4b0;border-radius:5px;background:#fff"></div><svg class="a" style="left:196px;top:284px;" width="26" height="26" viewBox="0 0 26 26"><circle cx="10.100" cy="11" r="6.500" fill="none" stroke="#9aa3ad" stroke-width="3.100"/><path d="M15 16l5.200 5.200" stroke="#9aa3ad" stroke-width="3.400" stroke-linecap="round"/></svg><span class="t" id="t44" style="top:286.30px;line-height:19px;font-size:13.4px;font-weight:400;color:#66727f;left:226.40px;transform-origin:0 50%;transform:matrix(0.9995,0.0005,0,1,0,0);">Search documents</span><div class="a" style="left:1660px;top:277px;width:170px;height:34.8px;background:#164a6b;border-radius:4px"></div><svg class="a" style="left:1672px;top:285px;" width="18" height="20" viewBox="0 0 18 20"><path d="M9 1.600l6.400 7h-3.700v5.200h-5.400v-5.200h-3.700z" fill="#fff"/><rect x="2.600" y="15.600" width="12.800" height="2.200" fill="#fff"/></svg><span class="t" id="t45" style="top:286.30px;line-height:19px;font-size:13.2px;font-weight:400;color:#fff;left:1703.20px;transform-origin:0 50%;transform:matrix(1.0432,0.0005,0,1,0,0);">Upload Documents</span><div class="a" style="left:185px;top:340px;width:1642.7px;height:600px;background:#fff;border:1px solid #a3a6ac;border-radius:5px 5px 0 0"></div><div class="a" style="left:186px;top:389px;width:1643px;height:48px;background:#cfd5e0"></div><div class="a" style="left:186px;top:388px;width:1643px;height:1px;background:#b4b7bd"></div><div class="a" style="left:186px;top:437px;width:1643px;height:2px;background:#a9acb3"></div><div class="a" style="left:186px;top:487px;width:1643px;height:2px;background:#a9acb3"></div><div class="a" style="left:186px;top:537px;width:1643px;height:2px;background:#a9acb3"></div><div class="a" style="left:186px;top:587px;width:1643px;height:2px;background:#a9acb3"></div><div class="a" style="left:186px;top:637px;width:1643px;height:2px;background:#a9acb3"></div><div class="a" style="left:186px;top:687px;width:1643px;height:2px;background:#a9acb3"></div><div class="a" style="left:186px;top:737px;width:1643px;height:2px;background:#a9acb3"></div><div class="a" style="left:186px;top:787px;width:1643px;height:2px;background:#a9acb3"></div><div class="a" style="left:186px;top:837px;width:1643px;height:2px;background:#a9acb3"></div><div class="a" style="left:186px;top:887px;width:1643px;height:2px;background:#a9acb3"></div><div class="a" style="left:186px;top:937px;width:1643px;height:2px;background:#a9acb3"></div><div class="a" style="left:207px;top:356px;width:14px;height:14px;border:2px solid #3c3c3c;border-radius:2.500px"></div><span class="t" id="t46" style="top:354.30px;line-height:22px;font-size:16.2px;font-weight:700;color:#3a3a3a;left:244.50px;transform-origin:0 50%;transform:matrix(0.9260,0.0005,0,1,0,0);">Document</span><svg class="a" style="left:337.7px;top:355.2px;" width="12" height="20" viewBox="0 0 12 20"><path d="M1.900 6.300l4.100-4.100 4.100 4.100M1.900 13.900l4.100 4.100 4.100-4.100" fill="none" stroke="#3a3a3a" stroke-width="1.700"/></svg><span class="t" id="t47" style="top:354.30px;line-height:22px;font-size:16.2px;font-weight:700;color:#3a3a3a;left:427.10px;transform-origin:0 50%;transform:matrix(0.9018,0.0005,0,1,0,0);">Type</span><svg class="a" style="left:480.1px;top:355.2px;" width="12" height="20" viewBox="0 0 12 20"><path d="M1.900 6.300l4.100-4.100 4.100 4.100M1.900 13.900l4.100 4.100 4.100-4.100" fill="none" stroke="#3a3a3a" stroke-width="1.700"/></svg><span class="t" id="t48" style="top:354.30px;line-height:22px;font-size:16.2px;font-weight:700;color:#3a3a3a;left:610.50px;transform-origin:0 50%;transform:matrix(0.9044,0.0005,0,1,0,0);">Send Date</span><svg class="a" style="left:702.3px;top:355.2px;" width="12" height="20" viewBox="0 0 12 20"><path d="M1.900 6.300l4.100-4.100 4.100 4.100M1.900 13.900l4.100 4.100 4.100-4.100" fill="none" stroke="#3a3a3a" stroke-width="1.700"/></svg><span class="t" id="t49" style="top:354.30px;line-height:22px;font-size:16.2px;font-weight:700;color:#3a3a3a;left:793.60px;transform-origin:0 50%;transform:matrix(0.9098,0.0005,0,1,0,0);">Received Date</span><svg class="a" style="left:914.2px;top:355.2px;" width="12" height="20" viewBox="0 0 12 20"><path d="M1.900 6.300l4.100-4.100 4.100 4.100M1.900 13.900l4.100 4.100 4.100-4.100" fill="none" stroke="#3a3a3a" stroke-width="1.700"/></svg><span class="t" id="t50" style="top:354.30px;line-height:22px;font-size:16.2px;font-weight:700;color:#3a3a3a;left:976.20px;transform-origin:0 50%;transform:matrix(0.9032,0.0005,0,1,0,0);">Encounter</span><svg class="a" style="left:1069px;top:355.2px;" width="12" height="20" viewBox="0 0 12 20"><path d="M1.900 6.300l4.100-4.100 4.100 4.100M1.900 13.900l4.100 4.100 4.100-4.100" fill="none" stroke="#3a3a3a" stroke-width="1.700"/></svg><span class="t" id="t51" style="top:354.30px;line-height:22px;font-size:16.2px;font-weight:700;color:#3a3a3a;left:1159.20px;transform-origin:0 50%;transform:matrix(0.9192,0.0005,0,1,0,0);">Category</span><svg class="a" style="left:1244.3px;top:355.2px;" width="12" height="20" viewBox="0 0 12 20"><path d="M1.900 6.300l4.100-4.100 4.100 4.100M1.900 13.900l4.100 4.100 4.100-4.100" fill="none" stroke="#3a3a3a" stroke-width="1.700"/></svg><span class="t" id="t52" style="top:354.30px;line-height:22px;font-size:16.2px;font-weight:700;color:#3a3a3a;left:1342.50px;transform-origin:0 50%;transform:matrix(0.8908,0.0005,0,1,0,0);">Clinician</span><svg class="a" style="left:1423.2px;top:355.2px;" width="12" height="20" viewBox="0 0 12 20"><path d="M1.900 6.300l4.100-4.100 4.100 4.100M1.900 13.900l4.100 4.100 4.100-4.100" fill="none" stroke="#3a3a3a" stroke-width="1.700"/></svg><span class="t" id="t53" style="top:354.30px;line-height:22px;font-size:16.2px;font-weight:700;color:#3a3a3a;left:1525.30px;transform-origin:0 50%;transform:matrix(0.8801,0.0005,0,1,0,0);">Share Status</span><svg class="a" style="left:1632.8px;top:355.2px;" width="12" height="20" viewBox="0 0 12 20"><path d="M1.900 6.300l4.100-4.100 4.100 4.100M1.900 13.900l4.100 4.100 4.100-4.100" fill="none" stroke="#3a3a3a" stroke-width="1.700"/></svg><div class="a" style="left:207px;top:404px;width:14px;height:14px;border:2px solid #3c3c3c;border-radius:2.500px"></div><span class="t" id="t54" style="top:403.30px;line-height:21px;font-size:15.2px;font-weight:400;color:#4a4a4a;left:244.30px;transform-origin:0 50%;transform:matrix(1.0002,0.0005,0,1,0,0);">Safety Plan</span><span class="t" id="t55" style="top:403.30px;line-height:21px;font-size:15.2px;font-weight:400;color:#4a4a4a;left:427.20px;transform-origin:0 50%;transform:matrix(1.0300,0.0005,0,1,0,0);">Form</span><span class="t" id="t56" style="top:403.30px;line-height:21px;font-size:15.2px;font-weight:400;color:#4a4a4a;left:610.50px;transform-origin:0 50%;transform:matrix(1.0864,0.0005,0,1,0,0);">12/30/2025 05:42 PM</span><span class="t" id="t57" style="top:403.30px;line-height:21px;font-size:15.2px;font-weight:400;color:#4a4a4a;left:793.60px;transform-origin:0 50%;transform:matrix(1.0864,0.0005,0,1,0,0);">12/30/2025 05:43 PM</span><span class="t" id="t58" style="top:403.30px;line-height:21px;font-size:15.2px;font-weight:400;color:#4a4a4a;left:1159.20px;transform-origin:0 50%;transform:matrix(0.9780,0.0005,0,1,0,0);">Consents and Legal For…</span><span class="t" id="t59" style="top:403.30px;line-height:21px;font-size:15.2px;font-weight:400;color:#4a4a4a;left:1342.50px;transform-origin:0 50%;transform:matrix(1.0094,0.0005,0,1,0,0);">John Smith</span><span class="t" id="t60" style="top:403.30px;line-height:21px;font-size:15.2px;font-weight:400;color:#4a4a4a;left:1525.30px;transform-origin:0 50%;transform:matrix(1.0244,0.0005,0,1,0,0);">Not Shared</span><svg class="a" style="left:1803.9px;top:405.3px;" width="6" height="18" viewBox="0 0 6 18"><g fill="#3e3e3e"><circle cx="3" cy="2.900" r="2.100"/><circle cx="3" cy="9" r="2.100"/><circle cx="3" cy="15.100" r="2.100"/></g></svg><div class="a" style="left:207px;top:454px;width:14px;height:14px;border:2px solid #3c3c3c;border-radius:2.500px"></div><span class="t" id="t61" style="top:453.30px;line-height:21px;font-size:15.2px;font-weight:400;color:#4a4a4a;left:244.30px;transform-origin:0 50%;transform:matrix(1.0404,0.0005,0,1,0,0);">Superbill</span><span class="t" id="t62" style="top:453.30px;line-height:21px;font-size:15.2px;font-weight:400;color:#4a4a4a;left:427.20px;transform-origin:0 50%;transform:matrix(1.0544,0.0005,0,1,0,0);">Document</span><span class="t" id="t63" style="top:453.30px;line-height:21px;font-size:15.2px;font-weight:400;color:#4a4a4a;left:793.60px;transform-origin:0 50%;transform:matrix(1.1013,0.0005,0,1,0,0);">11/18/2025 10:27 AM</span><span class="t" id="t64" style="top:453.30px;line-height:21px;font-size:15.2px;font-weight:400;color:#4a4a4a;left:1159.20px;transform-origin:0 50%;transform:matrix(1.0266,0.0005,0,1,0,0);">Invoices</span><span class="t" id="t65" style="top:453.30px;line-height:21px;font-size:15.2px;font-weight:400;color:#4a4a4a;left:1342.50px;transform-origin:0 50%;transform:matrix(1.0094,0.0005,0,1,0,0);">John Smith</span><span class="t" id="t66" style="top:453.30px;line-height:21px;font-size:15.2px;font-weight:400;color:#4a4a4a;left:1525.30px;transform-origin:0 50%;transform:matrix(1.0244,0.0005,0,1,0,0);">Not Shared</span><svg class="a" style="left:1803.9px;top:455.3px;" width="6" height="18" viewBox="0 0 6 18"><g fill="#3e3e3e"><circle cx="3" cy="2.900" r="2.100"/><circle cx="3" cy="9" r="2.100"/><circle cx="3" cy="15.100" r="2.100"/></g></svg><div class="a" style="left:207px;top:504px;width:14px;height:14px;border:2px solid #3c3c3c;border-radius:2.500px"></div><span class="t" id="t67" style="top:503.30px;line-height:21px;font-size:15.2px;font-weight:400;color:#4a4a4a;left:244.30px;transform-origin:0 50%;transform:matrix(1.0286,0.0005,0,1,0,0);">Invoice</span><span class="t" id="t68" style="top:503.30px;line-height:21px;font-size:15.2px;font-weight:400;color:#4a4a4a;left:427.20px;transform-origin:0 50%;transform:matrix(1.0544,0.0005,0,1,0,0);">Document</span><span class="t" id="t69" style="top:503.30px;line-height:21px;font-size:15.2px;font-weight:400;color:#4a4a4a;left:793.60px;transform-origin:0 50%;transform:matrix(1.1013,0.0005,0,1,0,0);">11/18/2025 10:27 AM</span><span class="t" id="t70" style="top:503.30px;line-height:21px;font-size:15.2px;font-weight:400;color:#4a4a4a;left:1159.20px;transform-origin:0 50%;transform:matrix(1.0266,0.0005,0,1,0,0);">Invoices</span><span class="t" id="t71" style="top:503.30px;line-height:21px;font-size:15.2px;font-weight:400;color:#4a4a4a;left:1342.50px;transform-origin:0 50%;transform:matrix(1.0094,0.0005,0,1,0,0);">John Smith</span><span class="t" id="t72" style="top:503.30px;line-height:21px;font-size:15.2px;font-weight:400;color:#4a4a4a;left:1525.30px;transform-origin:0 50%;transform:matrix(1.0244,0.0005,0,1,0,0);">Not Shared</span><svg class="a" style="left:1803.9px;top:505.3px;" width="6" height="18" viewBox="0 0 6 18"><g fill="#3e3e3e"><circle cx="3" cy="2.900" r="2.100"/><circle cx="3" cy="9" r="2.100"/><circle cx="3" cy="15.100" r="2.100"/></g></svg><div class="a" style="left:207px;top:554px;width:14px;height:14px;border:2px solid #3c3c3c;border-radius:2.500px"></div><span class="t" id="t73" style="top:553.30px;line-height:21px;font-size:15.2px;font-weight:400;color:#4a4a4a;left:244.30px;transform-origin:0 50%;transform:matrix(1.0404,0.0005,0,1,0,0);">Superbill</span><span class="t" id="t74" style="top:553.30px;line-height:21px;font-size:15.2px;font-weight:400;color:#4a4a4a;left:427.20px;transform-origin:0 50%;transform:matrix(1.0544,0.0005,0,1,0,0);">Document</span><span class="t" id="t75" style="top:553.30px;line-height:21px;font-size:15.2px;font-weight:400;color:#4a4a4a;left:793.60px;transform-origin:0 50%;transform:matrix(1.1013,0.0005,0,1,0,0);">11/18/2025 10:26 AM</span><span class="t" id="t76" style="top:553.30px;line-height:21px;font-size:15.2px;font-weight:400;color:#4a4a4a;left:1159.20px;transform-origin:0 50%;transform:matrix(1.0266,0.0005,0,1,0,0);">Invoices</span><span class="t" id="t77" style="top:553.30px;line-height:21px;font-size:15.2px;font-weight:400;color:#4a4a4a;left:1342.50px;transform-origin:0 50%;transform:matrix(1.0094,0.0005,0,1,0,0);">John Smith</span><span class="t" id="t78" style="top:553.30px;line-height:21px;font-size:15.2px;font-weight:400;color:#4a4a4a;left:1525.30px;transform-origin:0 50%;transform:matrix(1.0244,0.0005,0,1,0,0);">Not Shared</span><svg class="a" style="left:1803.9px;top:555.3px;" width="6" height="18" viewBox="0 0 6 18"><g fill="#3e3e3e"><circle cx="3" cy="2.900" r="2.100"/><circle cx="3" cy="9" r="2.100"/><circle cx="3" cy="15.100" r="2.100"/></g></svg><div class="a" style="left:207px;top:604px;width:14px;height:14px;border:2px solid #3c3c3c;border-radius:2.500px"></div><span class="t" id="t79" style="top:603.30px;line-height:21px;font-size:15.2px;font-weight:400;color:#4a4a4a;left:244.30px;transform-origin:0 50%;transform:matrix(1.0521,0.0005,0,1,0,0);">Progress Note 11/11/2…</span><span class="t" id="t80" style="top:603.30px;line-height:21px;font-size:15.2px;font-weight:400;color:#4a4a4a;left:427.20px;transform-origin:0 50%;transform:matrix(1.0280,0.0005,0,1,0,0);">Progress Note</span><span class="t" id="t81" style="top:603.30px;line-height:21px;font-size:15.2px;font-weight:400;color:#4a4a4a;left:976.20px;transform-origin:0 50%;transform:matrix(1.0864,0.0005,0,1,0,0);">10/27/2025 05:30 PM</span><span class="t" id="t82" style="top:603.30px;line-height:21px;font-size:15.2px;font-weight:400;color:#4a4a4a;left:1159.20px;transform-origin:0 50%;transform:matrix(1.0478,0.0005,0,1,0,0);">Clinical Notes</span><span class="t" id="t83" style="top:603.30px;line-height:21px;font-size:15.2px;font-weight:400;color:#4a4a4a;left:1342.50px;transform-origin:0 50%;transform:matrix(1.0094,0.0005,0,1,0,0);">John Smith</span><span class="t" id="t84" style="top:603.30px;line-height:21px;font-size:15.2px;font-weight:400;color:#4a4a4a;left:1525.30px;transform-origin:0 50%;transform:matrix(1.0244,0.0005,0,1,0,0);">Not Shared</span><svg class="a" style="left:1803.9px;top:605.3px;" width="6" height="18" viewBox="0 0 6 18"><g fill="#3e3e3e"><circle cx="3" cy="2.900" r="2.100"/><circle cx="3" cy="9" r="2.100"/><circle cx="3" cy="15.100" r="2.100"/></g></svg><div class="a" style="left:207px;top:654px;width:14px;height:14px;border:2px solid #3c3c3c;border-radius:2.500px"></div><span class="t" id="t85" style="top:653.30px;line-height:21px;font-size:15.2px;font-weight:400;color:#4a4a4a;left:244.30px;transform-origin:0 50%;transform:matrix(1.0260,0.0005,0,1,0,0);">Primary Care Note 09/…</span><span class="t" id="t86" style="top:653.30px;line-height:21px;font-size:15.2px;font-weight:400;color:#4a4a4a;left:427.20px;transform-origin:0 50%;transform:matrix(1.0394,0.0005,0,1,0,0);">Primary Care Note</span><span class="t" id="t87" style="top:653.30px;line-height:21px;font-size:15.2px;font-weight:400;color:#4a4a4a;left:976.20px;transform-origin:0 50%;transform:matrix(1.0928,0.0005,0,1,0,0);">09/23/2025 09:17 AM</span><span class="t" id="t88" style="top:653.30px;line-height:21px;font-size:15.2px;font-weight:400;color:#4a4a4a;left:1159.20px;transform-origin:0 50%;transform:matrix(1.0478,0.0005,0,1,0,0);">Clinical Notes</span><span class="t" id="t89" style="top:653.30px;line-height:21px;font-size:15.2px;font-weight:400;color:#4a4a4a;left:1342.50px;transform-origin:0 50%;transform:matrix(1.0094,0.0005,0,1,0,0);">John Smith</span><span class="t" id="t90" style="top:653.30px;line-height:21px;font-size:15.2px;font-weight:400;color:#4a4a4a;left:1525.30px;transform-origin:0 50%;transform:matrix(1.0244,0.0005,0,1,0,0);">Not Shared</span><svg class="a" style="left:1803.9px;top:655.3px;" width="6" height="18" viewBox="0 0 6 18"><g fill="#3e3e3e"><circle cx="3" cy="2.900" r="2.100"/><circle cx="3" cy="9" r="2.100"/><circle cx="3" cy="15.100" r="2.100"/></g></svg><div class="a" style="left:207px;top:704px;width:14px;height:14px;border:2px solid #3c3c3c;border-radius:2.500px"></div><span class="t" id="t91" style="top:703.30px;line-height:21px;font-size:15.2px;font-weight:400;color:#4a4a4a;left:244.30px;transform-origin:0 50%;transform:matrix(1.0039,0.0005,0,1,0,0);">Case Management 09/…</span><span class="t" id="t92" style="top:703.30px;line-height:21px;font-size:15.2px;font-weight:400;color:#4a4a4a;left:427.20px;transform-origin:0 50%;transform:matrix(1.0099,0.0005,0,1,0,0);">Case Management</span><span class="t" id="t93" style="top:703.30px;line-height:21px;font-size:15.2px;font-weight:400;color:#4a4a4a;left:976.20px;transform-origin:0 50%;transform:matrix(1.0864,0.0005,0,1,0,0);">09/19/2025 02:14 PM</span><span class="t" id="t94" style="top:703.30px;line-height:21px;font-size:15.2px;font-weight:400;color:#4a4a4a;left:1159.20px;transform-origin:0 50%;transform:matrix(1.0478,0.0005,0,1,0,0);">Clinical Notes</span><span class="t" id="t95" style="top:703.30px;line-height:21px;font-size:15.2px;font-weight:400;color:#4a4a4a;left:1342.50px;transform-origin:0 50%;transform:matrix(1.0094,0.0005,0,1,0,0);">John Smith</span><span class="t" id="t96" style="top:703.30px;line-height:21px;font-size:15.2px;font-weight:400;color:#4a4a4a;left:1525.30px;transform-origin:0 50%;transform:matrix(1.0244,0.0005,0,1,0,0);">Not Shared</span><svg class="a" style="left:1803.9px;top:705.3px;" width="6" height="18" viewBox="0 0 6 18"><g fill="#3e3e3e"><circle cx="3" cy="2.900" r="2.100"/><circle cx="3" cy="9" r="2.100"/><circle cx="3" cy="15.100" r="2.100"/></g></svg><div class="a" style="left:207px;top:754px;width:14px;height:14px;border:2px solid #3c3c3c;border-radius:2.500px"></div><span class="t" id="t97" style="top:753.30px;line-height:21px;font-size:15.2px;font-weight:400;color:#4a4a4a;left:244.30px;transform-origin:0 50%;transform:matrix(1.0865,0.0005,0,1,0,0);">Quick Note 09/18/2025</span><span class="t" id="t98" style="top:753.30px;line-height:21px;font-size:15.2px;font-weight:400;color:#4a4a4a;left:427.20px;transform-origin:0 50%;transform:matrix(1.0529,0.0005,0,1,0,0);">Quick Note</span><span class="t" id="t99" style="top:753.30px;line-height:21px;font-size:15.2px;font-weight:400;color:#4a4a4a;left:976.20px;transform-origin:0 50%;transform:matrix(1.0864,0.0005,0,1,0,0);">09/18/2025 05:44 PM</span><span class="t" id="t100" style="top:753.30px;line-height:21px;font-size:15.2px;font-weight:400;color:#4a4a4a;left:1159.20px;transform-origin:0 50%;transform:matrix(1.0478,0.0005,0,1,0,0);">Clinical Notes</span><span class="t" id="t101" style="top:753.30px;line-height:21px;font-size:15.2px;font-weight:400;color:#4a4a4a;left:1342.50px;transform-origin:0 50%;transform:matrix(1.0094,0.0005,0,1,0,0);">John Smith</span><span class="t" id="t102" style="top:753.30px;line-height:21px;font-size:15.2px;font-weight:400;color:#4a4a4a;left:1525.30px;transform-origin:0 50%;transform:matrix(1.0244,0.0005,0,1,0,0);">Not Shared</span><svg class="a" style="left:1803.9px;top:755.3px;" width="6" height="18" viewBox="0 0 6 18"><g fill="#3e3e3e"><circle cx="3" cy="2.900" r="2.100"/><circle cx="3" cy="9" r="2.100"/><circle cx="3" cy="15.100" r="2.100"/></g></svg><div class="a" style="left:207px;top:804px;width:14px;height:14px;border:2px solid #3c3c3c;border-radius:2.500px"></div><span class="t" id="t103" style="top:803.30px;line-height:21px;font-size:15.2px;font-weight:400;color:#4a4a4a;left:244.30px;transform-origin:0 50%;transform:matrix(1.0039,0.0005,0,1,0,0);">Case Management 09/…</span><span class="t" id="t104" style="top:803.30px;line-height:21px;font-size:15.2px;font-weight:400;color:#4a4a4a;left:427.20px;transform-origin:0 50%;transform:matrix(1.0099,0.0005,0,1,0,0);">Case Management</span><span class="t" id="t105" style="top:803.30px;line-height:21px;font-size:15.2px;font-weight:400;color:#4a4a4a;left:976.20px;transform-origin:0 50%;transform:matrix(1.0864,0.0005,0,1,0,0);">09/03/2025 05:18 PM</span><span class="t" id="t106" style="top:803.30px;line-height:21px;font-size:15.2px;font-weight:400;color:#4a4a4a;left:1159.20px;transform-origin:0 50%;transform:matrix(1.0478,0.0005,0,1,0,0);">Clinical Notes</span><span class="t" id="t107" style="top:803.30px;line-height:21px;font-size:15.2px;font-weight:400;color:#4a4a4a;left:1342.50px;transform-origin:0 50%;transform:matrix(1.0094,0.0005,0,1,0,0);">John Smith</span><span class="t" id="t108" style="top:803.30px;line-height:21px;font-size:15.2px;font-weight:400;color:#4a4a4a;left:1525.30px;transform-origin:0 50%;transform:matrix(1.0244,0.0005,0,1,0,0);">Not Shared</span><svg class="a" style="left:1803.9px;top:805.3px;" width="6" height="18" viewBox="0 0 6 18"><g fill="#3e3e3e"><circle cx="3" cy="2.900" r="2.100"/><circle cx="3" cy="9" r="2.100"/><circle cx="3" cy="15.100" r="2.100"/></g></svg><div class="a" style="left:207px;top:854px;width:14px;height:14px;border:2px solid #3c3c3c;border-radius:2.500px"></div><span class="t" id="t109" style="top:853.30px;line-height:21px;font-size:15.2px;font-weight:400;color:#4a4a4a;left:244.30px;transform-origin:0 50%;transform:matrix(1.0865,0.0005,0,1,0,0);">Quick Note 08/19/2025</span><span class="t" id="t110" style="top:853.30px;line-height:21px;font-size:15.2px;font-weight:400;color:#4a4a4a;left:427.20px;transform-origin:0 50%;transform:matrix(1.0529,0.0005,0,1,0,0);">Quick Note</span><span class="t" id="t111" style="top:853.30px;line-height:21px;font-size:15.2px;font-weight:400;color:#4a4a4a;left:976.20px;transform-origin:0 50%;transform:matrix(1.0864,0.0005,0,1,0,0);">08/14/2025 03:51 PM</span><span class="t" id="t112" style="top:853.30px;line-height:21px;font-size:15.2px;font-weight:400;color:#4a4a4a;left:1159.20px;transform-origin:0 50%;transform:matrix(1.0478,0.0005,0,1,0,0);">Clinical Notes</span><span class="t" id="t113" style="top:853.30px;line-height:21px;font-size:15.2px;font-weight:400;color:#4a4a4a;left:1342.50px;transform-origin:0 50%;transform:matrix(1.0094,0.0005,0,1,0,0);">John Smith</span><span class="t" id="t114" style="top:853.30px;line-height:21px;font-size:15.2px;font-weight:400;color:#4a4a4a;left:1525.30px;transform-origin:0 50%;transform:matrix(1.0244,0.0005,0,1,0,0);">Not Shared</span><svg class="a" style="left:1803.9px;top:855.3px;" width="6" height="18" viewBox="0 0 6 18"><g fill="#3e3e3e"><circle cx="3" cy="2.900" r="2.100"/><circle cx="3" cy="9" r="2.100"/><circle cx="3" cy="15.100" r="2.100"/></g></svg><div class="a" style="left:207px;top:904px;width:14px;height:14px;border:2px solid #3c3c3c;border-radius:2.500px"></div><span class="t" id="t115" style="top:903.30px;line-height:21px;font-size:15.2px;font-weight:400;color:#4a4a4a;left:244.30px;transform-origin:0 50%;transform:matrix(1.0652,0.0005,0,1,0,0);">SOAP Note 08/14/2025</span><span class="t" id="t116" style="top:903.30px;line-height:21px;font-size:15.2px;font-weight:400;color:#4a4a4a;left:427.20px;transform-origin:0 50%;transform:matrix(1.0111,0.0005,0,1,0,0);">SOAP Note</span><span class="t" id="t117" style="top:903.30px;line-height:21px;font-size:15.2px;font-weight:400;color:#4a4a4a;left:976.20px;transform-origin:0 50%;transform:matrix(1.0864,0.0005,0,1,0,0);">08/14/2025 03:39 PM</span><span class="t" id="t118" style="top:903.30px;line-height:21px;font-size:15.2px;font-weight:400;color:#4a4a4a;left:1159.20px;transform-origin:0 50%;transform:matrix(1.0478,0.0005,0,1,0,0);">Clinical Notes</span><span class="t" id="t119" style="top:903.30px;line-height:21px;font-size:15.2px;font-weight:400;color:#4a4a4a;left:1342.50px;transform-origin:0 50%;transform:matrix(1.0094,0.0005,0,1,0,0);">John Smith</span><span class="t" id="t120" style="top:903.30px;line-height:21px;font-size:15.2px;font-weight:400;color:#4a4a4a;left:1525.30px;transform-origin:0 50%;transform:matrix(1.0244,0.0005,0,1,0,0);">Not Shared</span><svg class="a" style="left:1803.9px;top:905.3px;" width="6" height="18" viewBox="0 0 6 18"><g fill="#3e3e3e"><circle cx="3" cy="2.900" r="2.100"/><circle cx="3" cy="9" r="2.100"/><circle cx="3" cy="15.100" r="2.100"/></g></svg><div class="a" style="left:182px;top:383px;width:1422.5px;height:49px;border:3px solid #960000"></div><div class="a" style="left:1639.2px;top:402.2px;width:154.5px;height:141.4px;background:#fff;box-shadow:0 2px 6px rgba(0,0,0,0.35),0 0 2px rgba(0,0,0,0.2)"></div><div class="a" style="left:1640px;top:487px;width:153px;height:28px;background:#2f74d9"></div><span class="t" id="t121" style="top:408.30px;line-height:20px;font-size:14.8px;font-weight:400;color:#4a4a4a;left:1654.30px;transform-origin:0 50%;transform:matrix(1.0803,0.0005,0,1,0,0);">Download</span><span class="t" id="t122" style="top:436.30px;line-height:20px;font-size:14.8px;font-weight:400;color:#4a4a4a;left:1654.30px;transform-origin:0 50%;transform:matrix(1.1269,0.0005,0,1,0,0);">Print</span><span class="t" id="t123" style="top:464.30px;line-height:20px;font-size:14.8px;font-weight:400;color:#4a4a4a;left:1654.30px;transform-origin:0 50%;transform:matrix(0.9949,0.0005,0,1,0,0);">Share</span><span class="t" id="t124" style="top:492.30px;line-height:20px;font-size:14.8px;font-weight:700;color:#fff;left:1653.80px;transform-origin:0 50%;transform:matrix(0.9531,0.0005,0,1,0,0);">Share to Sign</span><span class="t" id="t125" style="top:520.30px;line-height:20px;font-size:14.8px;font-weight:400;color:#4a4a4a;left:1654.30px;transform-origin:0 50%;transform:matrix(1.0963,0.0005,0,1,0,0);">Delete</span><div class="a" style="left:1631.2px;top:479.2px;width:148.8px;height:34.8px;border:3px solid #960000"></div><svg class="a" style="left:1749.8px;top:498.6px;" width="20" height="26" viewBox="0 0 20 26"><g transform="scale(1.05)"><path d="M5.600 2.600c0-1 .7-1.600 1.500-1.600s1.500.6 1.500 1.600v6.600l.4-.1v-1.300c0-.8.6-1.300 1.300-1.300s1.300.5 1.300 1.300v1.700l.4.100v-.900c0-.8.600-1.300 1.300-1.300s1.300.5 1.300 1.300v1.600l.300.100v-.400c0-.700.500-1.200 1.200-1.200s1.200.500 1.200 1.200v6.200c0 2.400-.800 3.600-1.600 5v2.400h-8.600v-2.200c-1.400-1.600-2.600-3.400-4.400-6.600-.600-1-.200-1.900.500-2.300.800-.400 1.700-.100 2.300.800l1.100 1.700z" fill="#fff" stroke="#111" stroke-width="1.100" stroke-linejoin="round"/><path d="M9.400 13.600v4.600M11.900 13.600v4.600M14.400 13.600v4.600" stroke="#111" stroke-width="0.900"/></g></svg></div></body></html>
